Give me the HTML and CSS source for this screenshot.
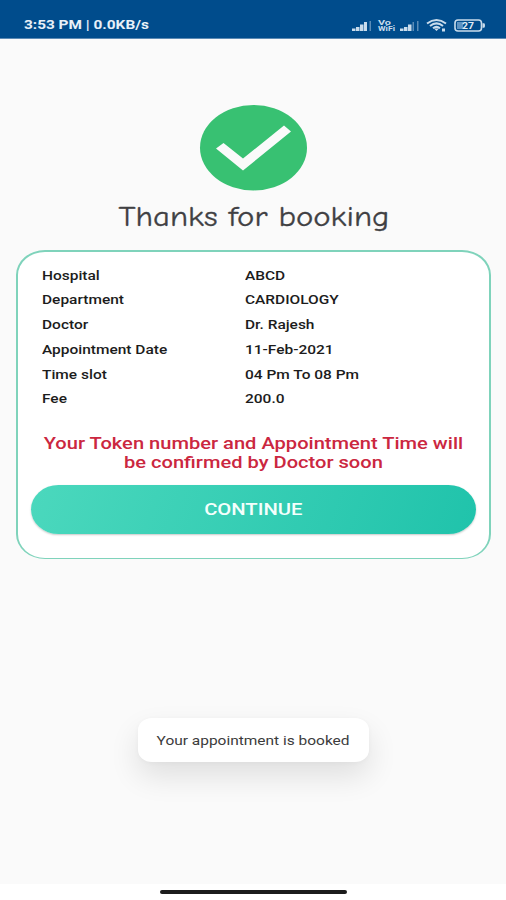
FILE: index.html
```
<!DOCTYPE html>
<html lang="en">

<head>
    <meta charset="UTF-8">
    <meta name="viewport" content="width=device-width, initial-scale=1.0">
    <title>Booking</title>
    <link rel="stylesheet" href="styles.css">
</head>

<body>
    <div class="screen">
        <div class="status-bar">
            <span class="wide clock">3:53 PM | 0.0KB/s</span>
            <svg class="status-icons" width="136" height="16" viewBox="0 0 136 16">
                <g fill="#c9dcec">
                    <path d="M2 11.500h3.500V14H2zM6 10h3.500v4H6zM10 7.500h3.500V14H10zM14 5h3v9h-3z" />
                    <path d="M50 11.500h3.500V14H50zM54 10h3.500v4H54zM58 7.500h3.500V14H58z" />
                    <path d="M19.500 4h1.500v10h-1.500zM62.500 5h1.500v9h-1.500zM67 4h1.500v10H67z" opacity=".45" />
                    <text class="vo" x="28" y="7.500" textLength="13" lengthAdjust="spacingAndGlyphs">Vo</text>
                    <text class="vo" x="28" y="14" textLength="17" lengthAdjust="spacingAndGlyphs">WiFi</text>
                </g>
                <g fill="none" stroke="#c9dcec" stroke-width="2">
                    <path d="M77 6.500Q86.500 -.5 96 6.500M80 9Q86.500 3.700 93 9M83 11.300Q86.500 8.500 90 11.300" />
                    <rect x="105" y="3" width="26.500" height="11" rx="3" stroke-width="1.600" />
                </g>
                <path d="M84 11.500h5L86.500 14zM92 11.500h3v3h-3zM132.500 6.200h1.500q1 0 1 2.300t-1 2.300h-1.500z" fill="#c9dcec" />
                <rect x="107" y="5" width="6" height="7" fill="#5e93c2" />
                <text class="battery" x="112" y="12" textLength="12" lengthAdjust="spacingAndGlyphs">27</text>
            </svg>
        </div>

        <div class="content">
            <svg class="check" width="108" height="86" viewBox="0 0 108 86">
                <ellipse cx="54.500" cy="42.700" rx="53.500" ry="42.700" fill="#38c172" />
                <path d="M17 43.500L24.500 38l19.500 15.500 41-33 7 6-48 39z" fill="#fafafa" />
            </svg>
            <h1 class="title"><span class="wide">Thanks for booking</span></h1>

            <div class="card">
                <dl class="details">
                    <dt><span class="wide">Hospital</span></dt>
                    <dd><span class="wide">ABCD</span></dd>
                    <dt><span class="wide">Department</span></dt>
                    <dd><span class="wide">CARDIOLOGY</span></dd>
                    <dt><span class="wide">Doctor</span></dt>
                    <dd><span class="wide">Dr. Rajesh</span></dd>
                    <dt><span class="wide">Appointment Date</span></dt>
                    <dd><span class="wide">11-Feb-2021</span></dd>
                    <dt><span class="wide">Time slot</span></dt>
                    <dd><span class="wide">04 Pm To 08 Pm</span></dd>
                    <dt><span class="wide">Fee</span></dt>
                    <dd><span class="wide">200.0</span></dd>
                </dl>
                <p class="notice"><span class="wide">Your Token number and Appointment Time will<br>be confirmed by Doctor soon</span></p>
                <button class="continue"><span class="wide">CONTINUE</span></button>
            </div>

            <div class="toast"><span class="wide">Your appointment is booked</span></div>
        </div>

        <div class="nav-bar">
            <div class="handle"></div>
        </div>
    </div>
</body>

</html>
```
FILE: styles.css
```
* {
    box-sizing: border-box;
    margin: 0;
    padding: 0;
}

body {
    font-family: Roboto, "Liberation Sans", sans-serif;
    background-color: #fafafa;
}

.screen {
    display: flex;
    flex-direction: column;
    width: 506px;
    height: 900px;
    overflow: hidden;
}

/* all the labels are set in a widened Roboto */
.wide {
    display: inline-block;
    white-space: nowrap;
    transform: scaleX(1.19);
}

.status-bar {
    display: flex;
    justify-content: space-between;
    align-items: center;
    height: 39px;
    padding: 11px 20px 0 24px;
    background-color: #004c8c;
    border-bottom: 1px solid #5c8ab4;
}

.clock {
    color: #e8f0f8;
    font-size: 12.5px;
    font-weight: 700;
    transform: scaleX(1.23);
    transform-origin: left;
}

.vo {
    font-size: 7px;
    font-weight: 700;
}

.battery {
    fill: #e0ebf4;
    font-size: 9px;
    font-weight: 700;
}

.content {
    display: flex;
    flex: 1;
    flex-direction: column;
    align-items: center;
    padding-top: 66px;
}

.title {
    height: 36px;
    margin: 7px 0 16px;
    padding-left: 2px;
    color: #404043;
    font-family: "Comic Neue", "Comic Sans MS", Lato, sans-serif;
    font-size: 29px;
    font-weight: 400;
    line-height: 37px;
    -webkit-text-stroke: 0.3px #404043;
}

.title .wide {
    transform: scaleX(1.13);
}

.card {
    width: 475px;
    height: 309px;
    padding: 11.5px 13px 0;
    background-color: #fff;
    border: 2px solid #7fd3bb;
    border-bottom-width: 1px;
    border-radius: 29px / 25px;
}

.details {
    display: grid;
    grid-template-columns: 203px 1fr;
    grid-auto-rows: 24.75px;
    padding-left: 11px;
    color: #1c1c1c;
    font-size: 13px;
    font-weight: 500;
    line-height: 24.75px;
}

.details .wide {
    transform-origin: left;
}

.notice {
    display: flex;
    justify-content: center;
    margin-top: 21.5px;
    color: #cb2740;
    font-size: 17px;
    font-weight: 500;
    line-height: 19px;
    text-align: center;
}

.notice .wide {
    transform: scaleX(1.182);
}

.continue {
    display: block;
    width: 445px;
    height: 49px;
    margin-top: 13px;
    color: #f4fffc;
    background: linear-gradient(110deg, #4bd8bd, #20c3ab);
    border: none;
    border-radius: 28px / 25px;
    box-shadow: 0 1px 2px rgba(0, 0, 0, 0.22);
    font-family: inherit;
    font-size: 17px;
    font-weight: 500;
}

.toast {
    display: flex;
    justify-content: center;
    align-items: center;
    width: 231px;
    height: 44px;
    margin-top: 159px;
    color: #3c3c3c;
    background-color: #fff;
    border-radius: 14px / 12px;
    box-shadow: 0 14px 30px rgba(0, 0, 0, 0.11), 0 1px 5px rgba(0, 0, 0, 0.03);
    font-size: 13px;
}

.nav-bar {
    display: flex;
    justify-content: center;
    height: 16px;
    padding-top: 6px;
    background-color: #fff;
}

.handle {
    width: 187px;
    height: 4px;
    background-color: #1c1c1c;
    border-radius: 2px;
}
```
